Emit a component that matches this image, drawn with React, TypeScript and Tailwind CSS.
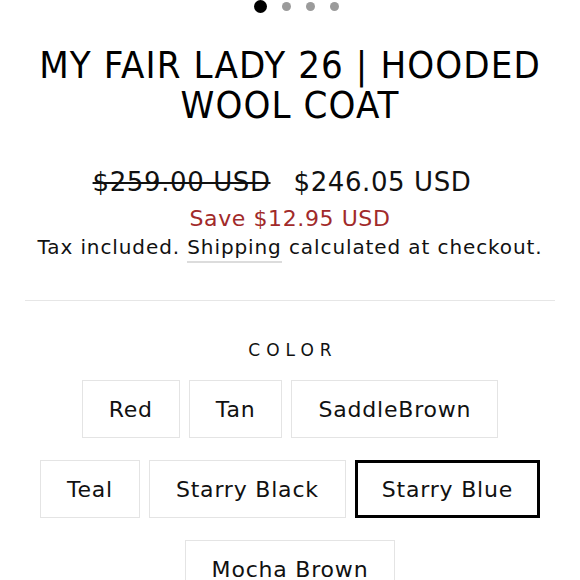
const colors = [
  ["Red", "Tan", "SaddleBrown"],
  ["Teal", "Starry Black", "Starry Blue"],
  ["Mocha Brown"],
];

const selected = "Starry Blue";

export default function App() {
  return (
    <div className="w-[580px] h-[580px] overflow-hidden bg-white text-[#111] font-['DejaVu_Sans','Liberation_Sans',sans-serif]">
      {/* carousel dots */}
      <div className="flex items-center justify-center gap-[15px] pl-[12px] h-[12px]">
        <span className="w-[13px] h-[13px] rounded-full bg-black" />
        <span className="w-[9px] h-[9px] rounded-full bg-[#9b9b9b]" />
        <span className="w-[9px] h-[9px] rounded-full bg-[#9b9b9b]" />
        <span className="w-[9px] h-[9px] rounded-full bg-[#9b9b9b]" />
      </div>

      <h1 className="mt-[33px] text-center text-[38px] leading-[40px] text-black font-['DejaVu_Sans_Condensed','Liberation_Sans_Narrow',sans-serif] tracking-[1.1px]">
        MY FAIR LADY 26 | HOODED
        <br />
        WOOL COAT
      </h1>

      <div className="mt-[42px] flex justify-center items-baseline gap-[23px] pr-[16px] text-[26px] leading-[30px] tracking-[0.6px]">
        <span className="line-through decoration-[2px]">$259.00 USD</span>
        <span>$246.05 USD</span>
      </div>
      <div className="mt-[8px] text-center text-[22px] leading-[28px] text-[#a12a2a] tracking-[0.6px]">
        Save $12.95 USD
      </div>
      <div className="mt-[2px] text-center text-[20px] leading-[24px] tracking-[0.9px]">
        Tax included.{" "}
        <span className="border-b-2 border-[#dcdcdc] pb-[2px]">Shipping</span> calculated at checkout.
      </div>

      <div className="mx-[25px] mt-[41px] border-t border-[#e6e6e6]" />

      <div className="mt-[39px] text-center text-[17px] leading-[20px] tracking-[6px] pl-[6px]">
        COLOR
      </div>

      <div className="mt-[20px] flex flex-col items-center gap-[22px]">
        {colors.map((row, i) => (
          <div key={i} className="flex gap-[9px]">
            {row.map((c) => (
              <div
                key={c}
                className={
                  c === selected
                    ? "h-[58px] px-[24px] flex items-center border-[3px] border-black text-[22px] tracking-[0.8px]"
                    : "h-[58px] px-[26px] flex items-center border border-[#e4e4e4] text-[22px] tracking-[0.8px]"
                }
              >
                {c}
              </div>
            ))}
          </div>
        ))}
      </div>
    </div>
  );
}
